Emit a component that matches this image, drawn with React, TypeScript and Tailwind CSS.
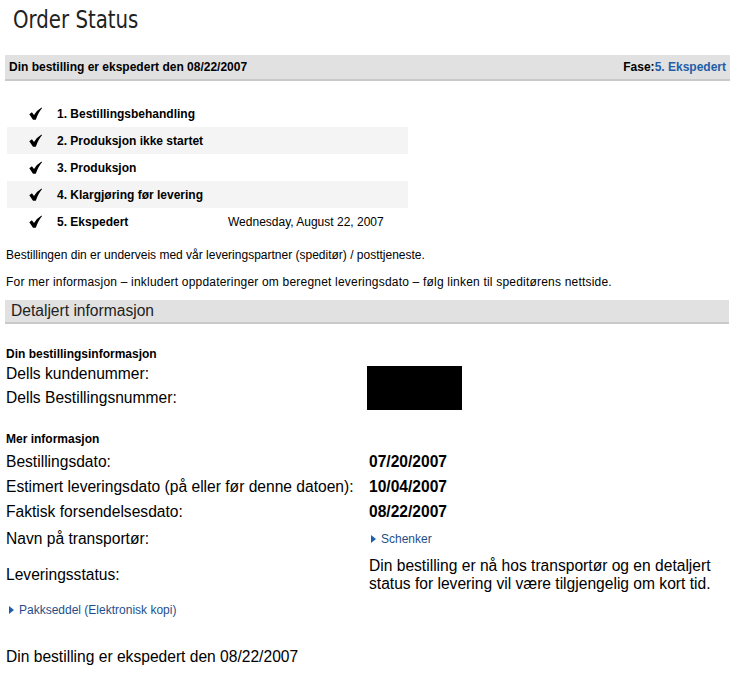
const steps = [
  "1. Bestillingsbehandling",
  "2. Produksjon ikke startet",
  "3. Produksjon",
  "4. Klargjøring før levering",
  "5. Ekspedert",
];

function Check() {
  return (
    <svg width="13" height="13" viewBox="0 0 13 13" className="shrink-0">
      <path d="M0.3 7.2 L2.9 5.3 L5 8.1 Q8 3 12.6 0.5 L13 1.3 Q9.6 5 6.8 12.7 L4 12.7 Z" fill="#000" />
    </svg>
  );
}

function Arrow() {
  return (
    <svg width="5" height="8" viewBox="0 0 5 8" className="mr-[5px] shrink-0">
      <path d="M0 0 L5 4 L0 8 Z" fill="#1e5ea8" />
    </svg>
  );
}

export default function App() {
  return (
    <div className="w-[737px] h-[675px] bg-white text-black overflow-hidden font-['Liberation_Sans',Arial,sans-serif]">
      <div className="pl-[13px] pt-[6px] h-[55px]">
        <h1 className="inline-block origin-left scale-x-[0.79] text-[25px] leading-[28px] font-['DejaVu_Sans',sans-serif] text-[#222]">
          Order Status
        </h1>
      </div>

      <div className="mx-[5px] w-[725px] h-[26px] bg-[#e1e1e1] border-b-2 border-[#c9c9c9] flex items-center justify-between px-[4px] text-[12px] font-bold">
        <span>Din bestilling er ekspedert den 08/22/2007</span>
        <span>
          Fase:<span className="text-[#1e5ea8]">5. Ekspedert</span>
        </span>
      </div>

      <div className="mt-[19px] ml-[7px] w-[401px]">
        {steps.map((s, i) => (
          <div
            key={s}
            className={`h-[27px] flex items-center text-[12px] font-bold ${i % 2 === 1 ? "bg-[#f4f4f4]" : ""}`}
          >
            <span className="ml-[22px] w-[28px]">
              <Check />
            </span>
            <span className="w-[171px]">{s}</span>
            {i === 4 && <span className="font-normal">Wednesday, August 22, 2007</span>}
          </div>
        ))}
      </div>

      <p className="mt-[13px] ml-[6px] text-[12px] leading-[14px]">
        Bestillingen din er underveis med vår leveringspartner (speditør) / posttjeneste.
      </p>
      <p className="mt-[13px] ml-[6px] text-[12px] leading-[14px] tracking-[0.2px]">
        For mer informasjon – inkludert oppdateringer om beregnet leveringsdato – følg linken til speditørens nettside.
      </p>

      <div className="mt-[11px] mx-[5px] w-[724px] h-[24px] bg-[#e1e1e1] border-b-2 border-[#c9c9c9] flex items-center pl-[6px] text-[15.6px] text-[#222]">
        Detaljert informasjon
      </div>

      <div className="ml-[6px] mt-[23px]">
        <div className="text-[12px] font-bold leading-[14px]">Din bestillingsinformasjon</div>
        <div className="flex">
          <div className="w-[361px] text-[15.6px] leading-[24px] mt-[1px]">
            <div>Dells kundenummer:</div>
            <div>Dells Bestillingsnummer:</div>
          </div>
          <div className="mt-[5px] w-[95px] h-[44px] bg-black" />
        </div>

        <div className="mt-[22px] text-[12px] font-bold leading-[14px]">Mer informasjon</div>
        <div className="mt-[3px] text-[15.6px]">
          <div className="flex h-[25px] items-center">
            <span className="w-[363px]">Bestillingsdato:</span>
            <span className="font-bold">07/20/2007</span>
          </div>
          <div className="flex h-[25px] items-center">
            <span className="w-[363px]">Estimert leveringsdato (på eller før denne datoen):</span>
            <span className="font-bold">10/04/2007</span>
          </div>
          <div className="flex h-[26px] items-center">
            <span className="w-[363px]">Faktisk forsendelsesdato:</span>
            <span className="font-bold">08/22/2007</span>
          </div>
          <div className="flex h-[27px] items-center">
            <span className="w-[363px]">Navn på transportør:</span>
            <span className="flex items-center text-[12px] text-[#1e4f8a] ml-[2px]">
              <Arrow />
              Schenker
            </span>
          </div>
          <div className="flex items-center h-[46px]">
            <span className="w-[363px]">Leveringsstatus:</span>
            <span className="w-[360px] leading-[18px]">
              Din bestilling er nå hos transportør og en detaljert status for levering vil være tilgjengelig om kort tid.
            </span>
          </div>
        </div>

        <div className="mt-[5px] ml-[3px] flex items-center text-[12px] text-[#1e4f8a] h-[14px]">
          <Arrow />
          Pakkseddel (Elektronisk kopi)
        </div>

        <div className="mt-[31px] text-[15.6px] leading-[18px]">Din bestilling er ekspedert den 08/22/2007</div>
      </div>
    </div>
  );
}
